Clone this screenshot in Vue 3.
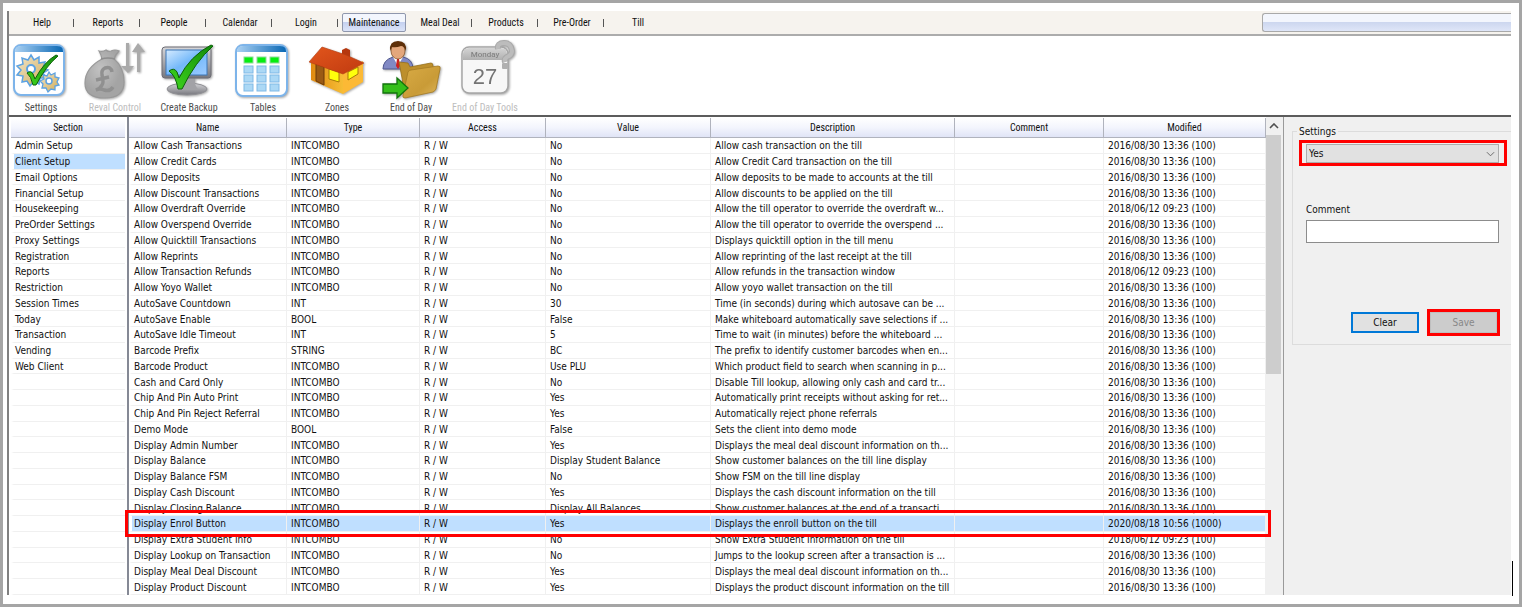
<script setup>
import { ref } from 'vue'

const menu = ['Help', 'Reports', 'People', 'Calendar', 'Login', 'Maintenance', 'Meal Deal', 'Products', 'Pre-Order', 'Till']
const activeMenu = 'Maintenance'

const sections = ['Admin Setup', 'Client Setup', 'Email Options', 'Financial Setup', 'Housekeeping', 'PreOrder Settings', 'Proxy Settings', 'Registration', 'Reports', 'Restriction', 'Session Times', 'Today', 'Transaction', 'Vending', 'Web Client']
const activeSection = 'Client Setup'

const D1 = '2016/08/30 13:36 (100)'
const D2 = '2018/06/12 09:23 (100)'
const I = 'INTCOMBO'
const rows = [
  ['Allow Cash Transactions', I, 'No', 'Allow cash transaction on the till', D1],
  ['Allow Credit Cards', I, 'No', 'Allow Credit Card transaction on the till', D1],
  ['Allow Deposits', I, 'No', 'Allow deposits to be made to accounts at the till', D1],
  ['Allow Discount Transactions', I, 'No', 'Allow discounts to be applied on the till', D1],
  ['Allow Overdraft Override', I, 'No', 'Allow the till operator to override the overdraft w...', D2],
  ['Allow Overspend Override', I, 'No', 'Allow the till operator to override the overspend ...', D1],
  ['Allow Quicktill Transactions', I, 'No', 'Displays quicktill option in the till menu', D1],
  ['Allow Reprints', I, 'No', 'Allow reprinting of the last receipt at the till', D1],
  ['Allow Transaction Refunds', I, 'No', 'Allow refunds in the transaction window', D2],
  ['Allow Yoyo Wallet', I, 'No', 'Allow yoyo wallet transaction on the till', D1],
  ['AutoSave Countdown', 'INT', '30', 'Time (in seconds) during which autosave can be ...', D1],
  ['AutoSave Enable', 'BOOL', 'False', 'Make whiteboard automatically save selections if ...', D1],
  ['AutoSave Idle Timeout', 'INT', '5', 'Time to wait (in minutes) before the whiteboard ...', D1],
  ['Barcode Prefix', 'STRING', 'BC', 'The prefix to identify customer barcodes when en...', D1],
  ['Barcode Product', I, 'Use PLU', 'Which product field to search when scanning in p...', D1],
  ['Cash and Card Only', I, 'No', 'Disable Till lookup, allowing only cash and card tr...', D1],
  ['Chip And Pin Auto Print', I, 'Yes', 'Automatically print receipts without asking for ret...', D1],
  ['Chip And Pin Reject Referral', I, 'Yes', 'Automatically reject phone referrals', D1],
  ['Demo Mode', 'BOOL', 'False', 'Sets the client into demo mode', D1],
  ['Display Admin Number', I, 'Yes', 'Displays the meal deal discount information on th...', D1],
  ['Display Balance', I, 'Display Student Balance', 'Show customer balances on the till line display', D1],
  ['Display Balance FSM', I, 'No', 'Show FSM on the till line display', D1],
  ['Display Cash Discount', I, 'Yes', 'Displays the cash discount information on the till', D1],
  ['Display Closing Balance', I, 'Display All Balances', 'Show customer balances at the end of a transacti...', D1],
  ['Display Enrol Button', I, 'Yes', 'Displays the enroll button on the till', '2020/08/18 10:56 (1000)'],
  ['Display Extra Student Info', I, 'No', 'Show Extra Student Information on the till', D2],
  ['Display Lookup on Transaction', I, 'No', 'Jumps to the lookup screen after a transaction is ...', D1],
  ['Display Meal Deal Discount', I, 'Yes', 'Displays the meal deal discount information on th...', D1],
  ['Display Product Discount', I, 'Yes', 'Displays the product discount information on the till', D1],
]
const selected = 'Display Enrol Button'

const value = ref('Yes')
const comment = ref('')
</script>

<template>
  <div class="frame">
    <div class="app">
      <nav class="menubar">
        <button
          v-for="m in menu"
          :key="m"
          type="button"
          class="menu-item"
          :class="{ active: m === activeMenu, bare: m === 'Maintenance' || m === 'Till' }"
        ><span>{{ m }}</span></button>
        <button type="button" class="menu-wide" aria-label="Session"></button>
      </nav>

      <div class="toolbar">
        <button type="button" class="tool">
          <svg viewBox="0 0 64 62" aria-hidden="true">
            <defs>
              <linearGradient id="bar" x1="0" x2="1"><stop offset="0" stop-color="#a9d0f2" /><stop offset="1" stop-color="#0a68b4" /></linearGradient>
              <linearGradient id="tick" x1="0" y1="1" x2="1" y2="0"><stop offset="0" stop-color="#3fd51c" /><stop offset="1" stop-color="#128a0c" /></linearGradient>
              <linearGradient id="gold" x1="0" x2="1" y2="1"><stop offset="0" stop-color="#efe5cb" /><stop offset="1" stop-color="#d3ac55" /></linearGradient>
            </defs>
            <rect x="5" y="7" width="50" height="50" rx="7" fill="#fff" stroke="#7db4ea" stroke-width="2" />
            <path d="M6 14V13q0-5 6-5h36q6 0 6 5v1z" fill="url(#bar)" />
            <path d="M22 17l3 5 5-3v6l6-1-2 6 5 2-5 3 3 5-6 0-1 6-5-3-4 5-3-5-5 1 1-6-6-1 4-5-4-4 6-2-1-6 6 2z" fill="url(#gold)" stroke="#5ca2e2" stroke-width="1.5" />
            <circle cx="22" cy="31" r="4" fill="#fff" stroke="#5ca2e2" stroke-width="2" />
            <path d="M40 34l2 3 4-2 0 4 4 1-2 4 2 3-4 1v4l-4-1-3 3-2-4-4 0 1-4-3-3 4-2-1-4 4 1z" fill="url(#gold)" stroke="#5ca2e2" stroke-width="1.3" />
            <circle cx="40" cy="43" r="3" fill="#fff" stroke="#5ca2e2" stroke-width="1.5" />
            <path d="M18 35q4-3 6 1l2 5Q35 24 47 17l2 1Q37 28 27 47h-3q-2-9-6-12z" fill="url(#tick)" stroke="#0c6208" />
          </svg>
          <span>Settings</span>
        </button>
        <button type="button" class="tool" disabled>
          <svg viewBox="0 0 64 62" aria-hidden="true">
            <defs>
              <radialGradient id="bag" cx=".4" cy=".4"><stop offset="0" stop-color="#c2c2c2" /><stop offset="1" stop-color="#a4a4a4" /></radialGradient>
            </defs>
            <path d="M16 13q4 1 7-1 2 2 5 1 4-2 8 0-4 4-5 8 10 8 10 23 0 16-19 16Q2 60 2 45q0-15 17-24-1-5-3-8z" fill="url(#bag)" stroke="#999" stroke-width="1.2" />
            <path d="M18 21q7-2 14 0" fill="none" stroke="#8d8d8d" stroke-width="1.5" />
            <path d="M29 34q-1-6-7-4-4 2-3 7 2 8 0 10-2 4-6 5 4-2 8 0 6 2 9-3M13 42l13-3" fill="none" stroke="#909090" stroke-width="3.5" />
            <path d="M43 5h3v23h5l-6 7-7-7h5z" fill="#aaa" /><path d="M54 34h3V14h5L55 5l-6 9h5z" fill="#aaa" />
          </svg>
          <span>Reval Control</span>
        </button>
        <button type="button" class="tool">
          <svg viewBox="0 0 64 62" aria-hidden="true">
            <defs>
              <linearGradient id="screen" x1="0" y1="0" x2="1" y2="1"><stop offset="0" stop-color="#d5ebff" /><stop offset=".5" stop-color="#73b8fa" /><stop offset="1" stop-color="#9ccbff" /></linearGradient>
              <linearGradient id="metal" x2="0" y2="1"><stop offset="0" stop-color="#d6d6d9" /><stop offset="1" stop-color="#77777d" /></linearGradient>
            </defs>
            <ellipse cx="30" cy="51" rx="20" ry="6" fill="url(#metal)" stroke="#8f8f94" />
            <path d="M24 40h14q-1 8 4 12H21q4-4 3-12z" fill="#a2a2a6" />
            <rect x="5" y="9" width="49" height="31" rx="3" fill="url(#metal)" stroke="#6c6c74" />
            <rect x="9" y="12" width="41" height="25" fill="url(#screen)" stroke="#3a77b8" />
            <path d="M12 33q5-4 8 1l2 6Q33 18 54 7l2 1Q38 24 25 51h-4q-2-13-9-18z" fill="url(#tick)" stroke="#0c6208" />
          </svg>
          <span>Create Backup</span>
        </button>
        <button type="button" class="tool">
          <svg viewBox="0 0 64 62" aria-hidden="true">
            <rect x="5" y="7" width="51" height="51" rx="7" fill="#fff" stroke="#7db4ea" stroke-width="2" />
            <path d="M6 14V13q0-5 6-5h37q6 0 6 5v1z" fill="url(#bar)" />
            <g fill="#06ee10" stroke="#8fdc9a"><rect x="13" y="19" width="9" height="6" /><rect x="26" y="19" width="9" height="6" /><rect x="39" y="19" width="9" height="6" /></g>
            <g fill="#abd8f5" stroke="#7fb9e6">
              <template v-for="y in [28, 37, 46]" :key="y"><rect v-for="x in [13, 26, 39]" :key="x" :x="x" :y="y" width="9" height="7" /></template>
            </g>
          </svg>
          <span>Tables</span>
        </button>
        <button type="button" class="tool">
          <svg viewBox="0 0 64 62" aria-hidden="true">
            <defs>
              <linearGradient id="roof" x1="0" x2="1" y2="1"><stop offset="0" stop-color="#e2561c" /><stop offset="1" stop-color="#c03a10" /></linearGradient>
              <linearGradient id="wall" x1="0" x2="1"><stop offset="0" stop-color="#e08a10" /><stop offset="1" stop-color="#f6bd35" /></linearGradient>
            </defs>
            <path d="M6 22l32 12v22L6 42z" fill="url(#wall)" />
            <path d="M38 34l20-11v21L38 56z" fill="#fcb935" />
            <path d="M11 26l8 3v18l-8-4z" fill="#9a5a14" stroke="#6b3808" />
            <path d="M24 31l10 3v10l-10-3z" fill="#ffff0c" stroke="#a77a08" />
            <path d="M43 34l10-5v7l-10 6z" fill="#ffff0c" stroke="#a77a08" />
            <path d="M37 12l4-2 4 2v8l-8-2z" fill="#b5370e" />
            <path d="M17 9l24 8 18 8-21 11L4 24z" fill="url(#roof)" stroke="#b33c10" stroke-width=".6" />
          </svg>
          <span>Zones</span>
        </button>
        <button type="button" class="tool">
          <svg viewBox="0 0 64 62" aria-hidden="true">
            <defs>
              <linearGradient id="folder" x1="0" x2="1" y2="1"><stop offset="0" stop-color="#d9ab45" /><stop offset=".6" stop-color="#c99b37" /><stop offset="1" stop-color="#dfb75c" /></linearGradient>
            </defs>
            <path d="M4 31q0-9 10-12h10q10 2 10 12z" fill="#8189c4" stroke="#4f578f" />
            <path d="M14 19l5 9 5-9z" fill="#fff" /><path d="M18 21h2l1 7-2 3-2-3z" fill="#d02020" />
            <ellipse cx="19" cy="13" rx="7" ry="8" fill="#e3a77c" stroke="#7a4a20" stroke-width=".7" />
            <path d="M11 13Q10 3 19 3t8 10q-2-5-5-5-5 2-9 1z" fill="#5d2f08" />
            <path d="M20 24l9 1 2 4 21-4q2 0 2 3v24L25 59q-1-18-5-35z" fill="#bd8f2c" stroke="#97701a" stroke-width=".8" />
            <path d="M29 34q1-2 3-2l27-4q3 0 2 3l-4 20q-1 2-3 3l-28 6q-3 0-2-3z" fill="url(#folder)" stroke="#a37a22" stroke-width=".8" />
            <path d="M4 46h14v-6l11 10-11 10v-5H4z" fill="#35bf1a" stroke="#12740c" stroke-width="1.3" />
          </svg>
          <span>End of Day</span>
        </button>
        <button type="button" class="tool" disabled>
          <svg viewBox="0 0 64 62" aria-hidden="true">
            <defs>
              <linearGradient id="cal" x2="0" y2="1"><stop offset="0" stop-color="#d4d4d4" /><stop offset="1" stop-color="#b0b0b0" /></linearGradient>
            </defs>
            <rect x="9" y="9" width="46" height="46" rx="7" fill="#f7f7f7" stroke="#a6a6a6" stroke-width="1.5" />
            <path d="M10 22v-6q0-6 6-6h32q6 0 6 6v6z" fill="url(#cal)" />
            <path d="M45 11Q44 5 51 5t8 8q0 4-5 6-3 2-2 5" fill="none" stroke="#a9a9a9" stroke-width="6" />
            <path d="M45 11Q44 5 51 5t8 8q0 4-5 6-3 2-2 5" fill="none" stroke="#bcbcbc" stroke-width="4" />
            <rect x="49" y="25" width="6" height="6" rx="1" fill="#b0b0b0" />
            <text x="32" y="19" class="cal-day">Monday</text>
            <text x="32" y="46" class="cal-num">27</text>
          </svg>
          <span>End of Day Tools</span>
        </button>
      </div>

      <div class="body">
        <div class="sections">
          <table>
            <thead><tr><th>Section</th></tr></thead>
            <tbody>
              <tr v-for="(r, i) in rows" :key="i" :class="{ sel: sections[i] === activeSection }"><td>{{ sections[i] || '\u00a0' }}</td></tr>
            </tbody>
          </table>
        </div>

        <div class="grid">
          <table>
            <colgroup>
              <col class="c-name"><col class="c-type"><col class="c-access"><col class="c-value"><col><col class="c-comment"><col class="c-mod">
            </colgroup>
            <thead>
              <tr><th>Name</th><th>Type</th><th>Access</th><th>Value</th><th>Description</th><th>Comment</th><th>Modified</th></tr>
            </thead>
            <tbody>
              <tr v-for="r in rows" :key="r[0]" :class="{ sel: r[0] === selected }">
                <td>{{ r[0] }}<i v-if="r[0] === selected" class="row-mark"></i></td>
                <td>{{ r[1] }}</td>
                <td>R / W</td>
                <td>{{ r[2] }}</td>
                <td>{{ r[3] }}</td>
                <td></td>
                <td>{{ r[4] }}</td>
              </tr>
            </tbody>
          </table>
        </div>

        <div class="scroll">
          <button type="button" class="scroll-up" aria-label="Scroll up">
            <svg viewBox="0 0 10 6" aria-hidden="true"><path d="M1 5l4-4 4 4" fill="none" stroke="#505050" stroke-width="1.6" /></svg>
          </button>
          <div class="thumb"></div>
        </div>

        <form class="side" @submit.prevent>
          <fieldset>
            <legend><label for="setting-value">Settings</label></legend>
            <div class="mark select-mark">
              <select id="setting-value" v-model="value"><option>Yes</option><option>No</option></select>
              <svg class="chev" viewBox="0 0 10 6" aria-hidden="true"><path d="M1 1l4 4 4-4" fill="none" stroke="#606060" /></svg>
            </div>
            <label class="comment-label" for="setting-comment">Comment</label>
            <input id="setting-comment" v-model="comment" type="text">
            <div class="actions">
              <button type="button" class="clear">Clear</button>
              <div class="mark"><button type="submit" class="save" disabled>Save</button></div>
            </div>
          </fieldset>
        </form>
      </div>
    </div>
    <div class="caret"></div>
  </div>
</template>

<style>
html, body, #app { height: 100%; }
body { margin: 0; }
</style>

<style scoped>
* { box-sizing: border-box; }
button, input, select { font: inherit; color: inherit; margin: 0; padding: 0; border-radius: 0; }
.frame {
  position: relative;
  display: flex;
  min-height: 100%;
  border: 3px solid #a5a5a5;
  padding: 8px 8px 9px 4px;
  background: #fff;
  font-family: "DejaVu Sans Condensed", "DejaVu Sans", sans-serif;
  font-size: 10px;
  color: #101010;
}
.caret { position: absolute; right: 6px; bottom: 8px; width: 1px; height: 35px; background: #000; }
.app { flex: 1; min-width: 0; display: flex; flex-direction: column; border-left: 2px solid #808080; }

.menubar {
  display: flex;
  align-items: center;
  height: 25px;
  background: #f6f3ee;
  border-bottom: 2px solid #acacac;
  font-family: "Roboto Condensed", Roboto, sans-serif;
}
.menu-item { position: relative; width: 66px; height: 19px; border: 0; background: none; }
.menu-item::after { content: ""; position: absolute; right: 1px; top: 6px; width: 1px; height: 8px; background: #555; }
.menu-item.bare::after { display: none; }
.menu-item.active {
  width: 64px;
  margin: 0 1px 0 3px;
  border: 1px solid #8f97ad;
  border-radius: 2px;
  background: linear-gradient(#f3f6fd 0 45%, #c5d1f0 50%, #dce4f8);
}
.menu-wide {
  width: 249px;
  height: 19px;
  margin-left: auto;
  border: 1px solid #a9a9a9;
  border-right: 0;
  border-radius: 3px 0 0 3px;
  background: linear-gradient(#f3f6fd 0 45%, #cdd7ef 50%, #dfe6f8);
}

.toolbar {
  display: flex;
  gap: 10px;
  height: 81px;
  padding-top: 2px;
  border-bottom: 2px solid #5c5c5c;
  font-family: "Roboto Condensed", Roboto, sans-serif;
}
.tool {
  width: 64px;
  display: flex;
  flex-direction: column;
  align-items: center;
  border: 0;
  background: none;
  white-space: nowrap;
  color: #4c4c4c;
}
.tool svg { width: 64px; height: 62px; flex: none; filter: drop-shadow(1px 1px 1px rgba(0, 0, 0, 0.35)); }
.tool span { line-height: 15px; }
.tool:disabled { color: #bdbdbd; }
.cal-day { font: 500 8px Roboto, sans-serif; text-anchor: middle; fill: #858585; }
.cal-num { font: 22px "Liberation Sans", Arial, sans-serif; text-anchor: middle; fill: #747474; }

.body { flex: 1; display: flex; background: #f0f0f0; }
.sections { width: 120px; padding: 1px 2px 0; border-right: 2px solid #858995; background: #fff; display: flex; }
.grid { flex: 1; min-width: 0; padding: 1px 0 0; background: #fff; display: flex; }
table { width: 100%; table-layout: fixed; border-collapse: separate; border-spacing: 0; }
th {
  height: 20px;
  padding: 0;
  font-weight: normal;
  font-family: "Roboto Condensed", Roboto, sans-serif;
  background: linear-gradient(#fff, #f3f5fd 50%, #e0e4f6);
  border-right: 1px solid #b0b3bd;
  border-bottom: 1px solid #b0b3bd;
}
td {
  padding: 2px 0 0 4px;
  line-height: 12px;
  white-space: nowrap;
  overflow: hidden;
  border-right: 1px solid #f0f0f0;
  border-bottom: 1px solid #f0f0f0;
}
td:first-child { border-left: 3px solid #fff; padding-left: 2px; }
.sections td:first-child { padding-left: 1px; }
.sections th, .sections td { border-right: 0; }
.sel { position: relative; }
.sel td { background: #bfdfff; background-clip: padding-box; }
.c-name { width: 158px; }
.c-type { width: 133px; }
.c-access { width: 126px; }
.c-value { width: 165px; }
.c-comment { width: 149px; }
.c-mod { width: 162px; }
.row-mark {
  position: absolute;
  left: -4px;
  right: -5px;
  top: -6px;
  bottom: -5px;
  border: 3px solid #f00;
  pointer-events: none;
}

.scroll { width: 18px; padding-right: 2px; border-right: 1px solid #9a9a9a; display: flex; flex-direction: column; }
.scroll-up { height: 18px; border: 0; background: #f0f0f0; display: grid; place-items: center; }
.scroll-up svg { width: 10px; height: 6px; }
.thumb { flex: 0 0 50%; background: #cdcdcd; }

.side { width: 227px; padding: 8px 0 0 8px; }
fieldset { margin: 0; min-width: 0; height: 220px; padding: 2px 4px 0 6px; border: 1px solid #dcdcdc; border-right: 0; }
legend { margin-left: -2px; padding: 0 2px; line-height: 13px; }
.mark { border: 3px solid #f00; }
.select-mark { position: relative; height: 26px; padding: 1px 5px 0 4px; }
select {
  display: block;
  width: 100%;
  height: 19px;
  padding-left: 2px;
  border: 1px solid #adadad;
  background: #e1e1e1;
  appearance: none;
}
.chev { position: absolute; right: 9px; top: 8px; width: 9px; height: 6px; }
.comment-label { display: block; margin-top: 37px; line-height: 14px; padding-left: 7px; }
#setting-comment {
  display: block;
  width: calc(100% - 15px);
  height: 23px;
  margin: 3px 0 0 7px;
  border: 1px solid #8c8c8c;
  background: #fff;
}
.actions { display: flex; justify-content: flex-end; align-items: center; gap: 8px; margin-top: 66px; padding-right: 7px; }
.clear { width: 68px; height: 21px; border: 2px solid #0078d7; background: #e1e1e1; }
.save { display: block; width: 67px; height: 21px; border: 1px solid #bfbfbf; background: #ccc; color: #888; }
</style>
